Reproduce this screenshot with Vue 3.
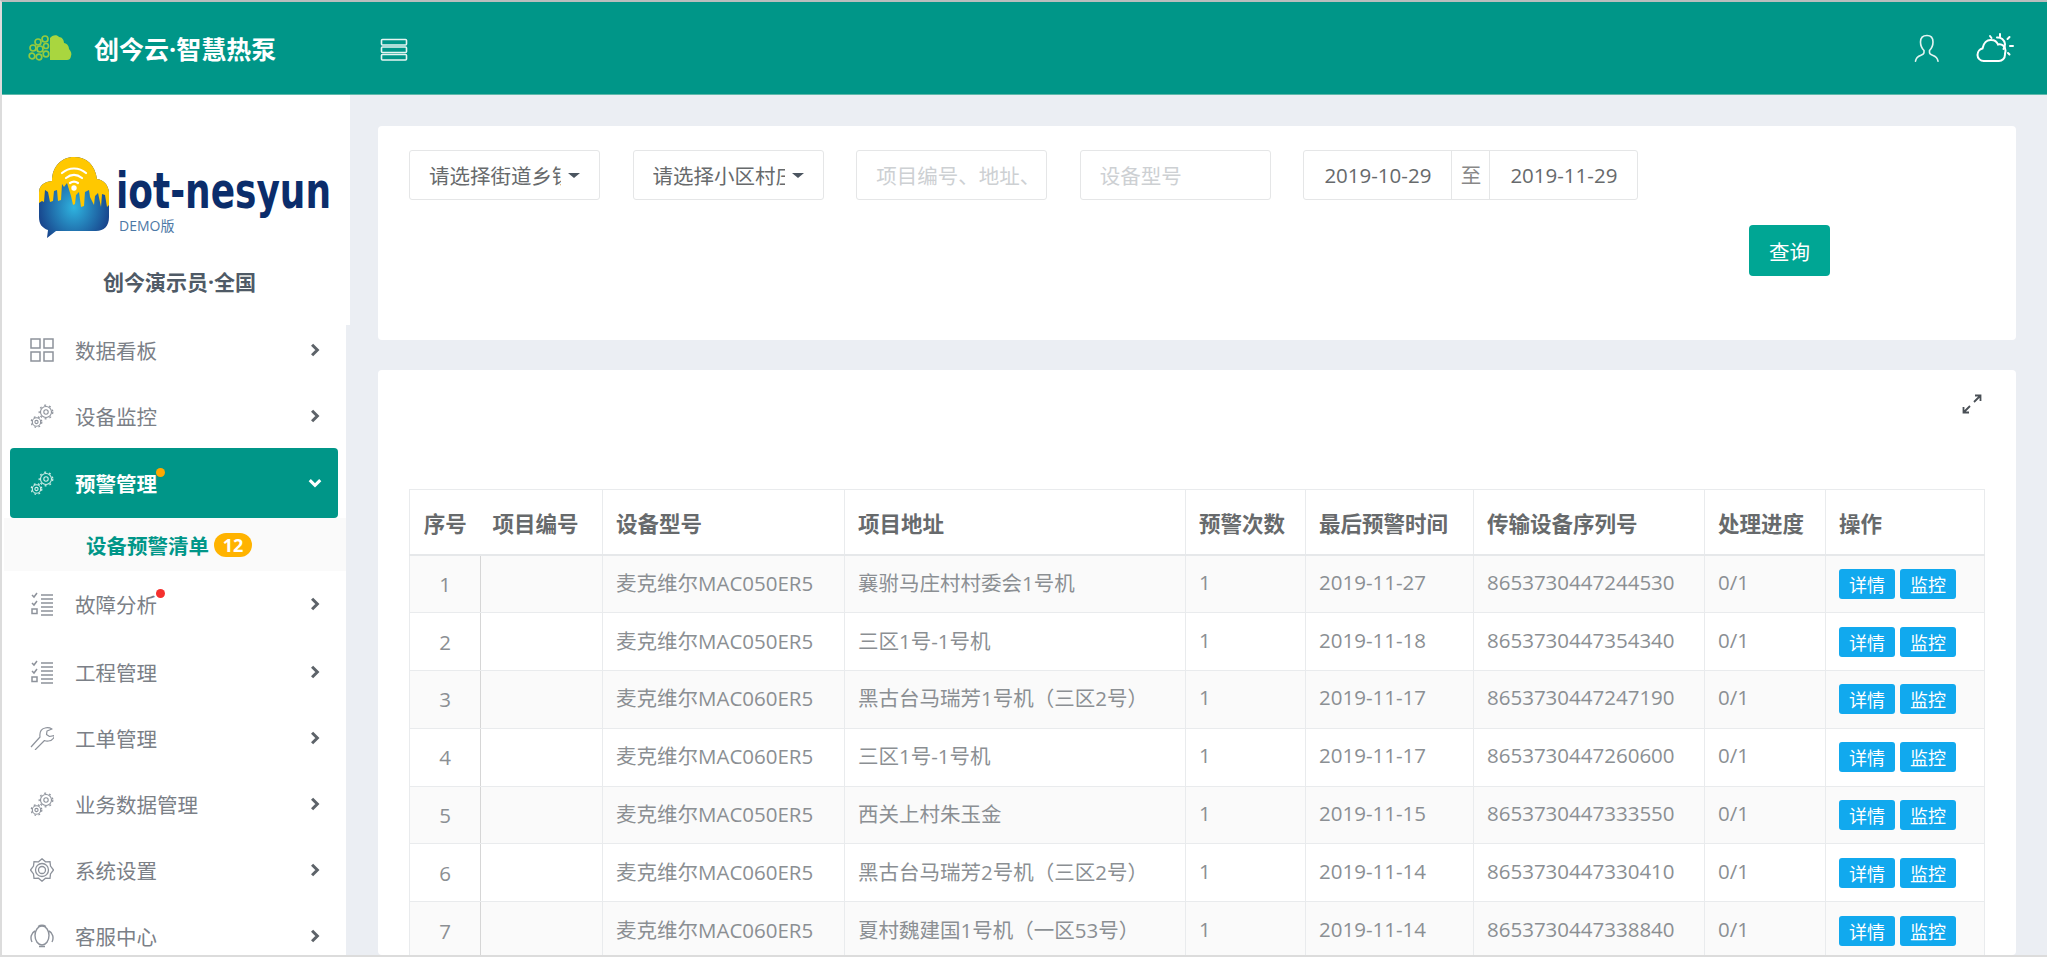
<template>
  <div class="frame">
    <header class="topbar">
      <div class="brand">
        <svg class="brand-logo" viewBox="0 0 44 28" width="44" height="28">
          <g fill="none" stroke="#95cb3f" stroke-width="1.700">
            <circle cx="17" cy="5" r="3" />
            <circle cx="10" cy="8" r="3" />
            <circle cx="5" cy="14" r="3" />
            <circle cx="12" cy="15" r="3" />
            <circle cx="18" cy="12" r="2.500" />
            <circle cx="4" cy="22" r="2.800" />
            <circle cx="11" cy="23" r="2.800" />
            <circle cx="18" cy="20" r="2.800" />
          </g>
          <path
            d="M22 26V4c2-3 7-4 9-1 3 0 5 3 5 6 3 .5 5 3 5 6 2 2 3 5 2 7-.5 3-2 4-4 4z"
            fill="#a9d63f"
          />
        </svg>
        <span class="brand-name">创今云·智慧热泵</span>
      </div>
      <svg class="menu-toggle" viewBox="0 0 28 24" width="28" height="24">
        <g fill="none" stroke="#e6f5f2" stroke-width="1.600">
          <rect x="1.500" y="1.500" width="25" height="5.500" rx="1" />
          <rect x="1.500" y="9" width="25" height="5.500" rx="1" />
          <rect x="1.500" y="16.500" width="25" height="5.500" rx="1" />
        </g>
      </svg>
      <div class="topbar-right">
        <svg viewBox="0 0 26 28" width="26" height="28">
          <path
            d="M13 1.500c-4 0-6.500 2.500-6.500 6.500 0 3.500 1.500 6.500 3.500 8.500v2c0 1-1 2-3 2.700-3 1-5 2.500-5.500 6M13 1.500c4 0 6 2.500 6 6.500 0 3.500-1.500 6.500-3.500 8.500v2c0 1 1 2 3 2.700 3 1 5 2.500 5.500 6"
            fill="none"
            stroke="#e3f4f1"
            stroke-width="1.600"
            stroke-linecap="round"
          />
        </svg>
        <svg viewBox="0 0 38 30" width="38" height="30">
          <g fill="none" stroke="#fff" stroke-width="2" stroke-linecap="round">
            <path d="M8 28c-4 0-6.500-3-6.500-6 0-3.500 2.500-6 5-6.500C7.500 10 11 6.500 15.500 7c3 0 5.500 2 6.500 4.500 4-1 7.500 2 7.500 6 0 1-.2 2-.5 3" />
            <path d="M8 28h15c3 0 6-2.500 6-6.500" />
            <path d="M21 4.500c4-.5 7.500 2.500 8 6.500 0 2-.5 3.500-1.500 5" />
            <path d="M24 1v2.500M33.500 4l-2 2M37 13h-3M33.500 21.500l-1.500-1.500M14 3l1.500 2" />
          </g>
        </svg>
      </div>
    </header>

    <div class="body">
      <aside class="sidebar">
        <div class="profile">
          <svg class="logo" viewBox="0 0 300 84" width="300" height="84">
            <defs>
              <radialGradient id="cityGrad" cx="50%" cy="62%" r="60%">
                <stop offset="0" stop-color="#2fb4e0" />
                <stop offset="1" stop-color="#14337f" />
              </radialGradient>
            </defs>
            <path
              d="M3 60V36c0-7 4-11 13-12 0-14 9-24 22-24s21 8 23 22c7 1 11 6 12 13v25c0 9-5 14-13 14H20l-9 7 1-8c-6-2-9-6-9-13z"
              fill="url(#cityGrad)"
            />
            <path
              d="M3 46V36c0-7 4-11 13-12 0-14 9-24 22-24s21 8 23 22c7 1 11 6 12 13v13l-2 2-2-12-3-1-1 13-3-14-3 3-1 9-4-8-1-7-4 2-1 14-3 1-2-15-3 3-1 9-2 1-2-9-4-13-3 4-2-3-1 16-3 1-1-11-3 1-1 10-3 1-2-10-3-2-1 12-2-1z"
              fill="#ffc800"
            />
            <g fill="none" stroke="#fff" stroke-width="2.200" stroke-linecap="round">
              <path d="M26 16c7-6 17-6 24 0" />
              <path d="M30 21c5-4 11-4 16 0" />
              <path d="M34 26c3-2 5-2 8 0" />
            </g>
            <circle cx="38" cy="31" r="2.700" fill="#fff" />
            <text class="wordmark" x="80" y="51" textLength="215" lengthAdjust="spacingAndGlyphs">iot-nesyun</text>
          </svg>
          <span class="demo">DEMO版</span>
          <p class="user-name">创今演示员·全国</p>
        </div>

        <nav class="menu">
          <template v-for="item in menu" :key="item.label">
            <div class="menu-item" :class="{ active: item.active, 'after-sub': item.gapAbove }">
              <svg class="menu-icon" viewBox="0 0 24 24" width="24" height="24">
                <template v-if="item.icon === 'grid'">
                  <g fill="none" stroke="currentColor" stroke-width="1.500">
                    <rect x="1" y="1" width="9" height="9" />
                    <rect x="14" y="1" width="9" height="9" />
                    <rect x="1" y="14" width="9" height="9" />
                    <rect x="14" y="14" width="9" height="9" />
                  </g>
                </template>
                <template v-else-if="item.icon === 'gears'">
                  <g fill="none" stroke="currentColor">
                    <circle cx="16" cy="8" r="5.500" stroke-width="1.100" />
                    <circle cx="16" cy="8" r="6.800" stroke-width="1.200" stroke-dasharray="2 3" />
                    <circle cx="16" cy="8" r="2.200" stroke-width="1.100" />
                    <circle cx="6.500" cy="18" r="4.200" stroke-width="1.100" />
                    <circle cx="6.500" cy="18" r="5.300" stroke-width="1.200" stroke-dasharray="1.800 2.500" />
                    <circle cx="6.500" cy="18" r="1.600" stroke-width="1.100" />
                  </g>
                </template>
                <template v-else-if="item.icon === 'list'">
                  <g fill="none" stroke="currentColor" stroke-width="1.500">
                    <path d="M2 3l2 2 3-4M2 11l2 2 3-4" />
                    <rect x="2" y="17" width="5" height="4.500" />
                    <path d="M11 3h12M11 7h12M11 11h12M11 15h12M11 19h12M11 23h12" />
                  </g>
                </template>
                <template v-else-if="item.icon === 'wrench'">
                  <path
                    d="M1 21l9-10c-.5-4 1-8 5-9 2.500-.7 5-.2 7 1l-5 2-.5 3.500 3 2 5-1c-.5 3-3 5-6 5.500-2 .3-3 0-4-.500L5 24"
                    fill="none"
                    stroke="currentColor"
                    stroke-width="1.200"
                    stroke-linejoin="round"
                  />
                </template>
                <template v-else-if="item.icon === 'cog'">
                  <g fill="none" stroke="currentColor" stroke-width="1.300">
                    <path d="M12 .8l3.500 3 4.500-.2.500 4.500 3 3.900-3 3.900-.5 4.500-4.500-.2-3.500 3-3.500-3-4.500.2-.5-4.500-3-3.900 3-3.900.5-4.500 4.500.2z" />
                    <circle cx="12" cy="12" r="6.500" />
                    <circle cx="12" cy="12" r="3.500" />
                  </g>
                </template>
                <template v-else>
                  <g fill="none" stroke="currentColor" stroke-width="1.400">
                    <ellipse cx="12" cy="11.500" rx="7" ry="9.500" />
                    <path d="M5 7C1 9 0 14 2 18M19 7c4 2 5 7 3 11M9 22.500h6" />
                    <path d="M8 2.500c2.500-1.500 5.500-1.500 8 0" />
                  </g>
                </template>
              </svg>
              <span class="menu-label">
                {{ item.label }}
                <i v-if="item.dot" class="dot" :class="item.dot"></i>
              </span>
              <svg class="chevron" viewBox="0 0 12 12" width="14" height="14">
                <path v-if="item.active" d="M1.500 3.500L6 8l4.500-4.500" />
                <path v-else d="M3.500 1.500L8 6l-4.500 4.500" />
              </svg>
            </div>
            <div v-if="item.active" class="sub-menu">
              <span class="sub-label">设备预警清单</span>
              <span class="count">12</span>
            </div>
          </template>
        </nav>
      </aside>

      <main class="main">
        <section class="card filters">
          <div class="filter-row">
            <div class="field select"><span class="select-text">请选择街道乡镇</span><i class="caret"></i></div>
            <div class="field select"><span class="select-text">请选择小区村庄</span><i class="caret"></i></div>
            <div class="field placeholder"><span class="select-text wide">项目编号、地址、</span></div>
            <div class="field placeholder">设备型号</div>
            <div class="date-range">
              <span class="date">2019-10-29</span>
              <span class="date-sep">至</span>
              <span class="date">2019-11-29</span>
            </div>
          </div>
          <button class="query-btn">查询</button>
        </section>

        <section class="card list">
          <div class="list-tools">
            <svg viewBox="0 0 20 20" width="20" height="20">
              <g fill="none" stroke="#4a5056" stroke-width="1.800">
                <path d="M12 8l6-6M13 1.500h5.500V7M8 12l-6 6M1.500 13v5.500H7" />
              </g>
            </svg>
          </div>
          <table class="alarm-table">
            <colgroup>
              <col v-for="w in colWidths" :key="w.key" :style="{ width: w.px + 'px' }" />
            </colgroup>
            <thead>
              <tr>
                <th class="first-head">序号</th>
                <th class="second-head">项目编号</th>
                <th>设备型号</th>
                <th>项目地址</th>
                <th>预警次数</th>
                <th>最后预警时间</th>
                <th>传输设备序列号</th>
                <th>处理进度</th>
                <th>操作</th>
              </tr>
            </thead>
            <tbody>
              <tr v-for="(row, i) in rows" :key="row.serial">
                <td class="index-cell">{{ i + 1 }}</td>
                <td></td>
                <td class="raised">{{ row.model }}</td>
                <td class="raised address" lang="zh-Hant">{{ row.address }}</td>
                <td class="raised">1</td>
                <td class="raised">{{ row.time }}</td>
                <td class="raised">{{ row.serial }}</td>
                <td class="raised">0/1</td>
                <td>
                  <div class="actions">
                    <button class="mini-btn">详情</button>
                    <button class="mini-btn">监控</button>
                  </div>
                </td>
              </tr>
            </tbody>
          </table>
        </section>
      </main>
    </div>
  </div>
</template>

<script setup>
const menu = [
  { label: '数据看板', icon: 'grid' },
  { label: '设备监控', icon: 'gears' },
  { label: '预警管理', icon: 'gears', active: true, dot: 'orange' },
  { label: '故障分析', icon: 'list', dot: 'red' },
  { label: '工程管理', icon: 'list', gapAbove: true },
  { label: '工单管理', icon: 'wrench' },
  { label: '业务数据管理', icon: 'gears' },
  { label: '系统设置', icon: 'cog' },
  { label: '客服中心', icon: 'headset' }
]

const colWidths = [
  { key: 'idx', px: 71 },
  { key: 'no', px: 122 },
  { key: 'model', px: 242 },
  { key: 'addr', px: 341 },
  { key: 'times', px: 120 },
  { key: 'time', px: 168 },
  { key: 'serial', px: 231 },
  { key: 'progress', px: 121 },
  { key: 'ops', px: 159 }
]

const rows = [
  { model: '麦克维尔MAC050ER5', address: '襄驸马庄村村委会1号机', time: '2019-11-27', serial: '8653730447244530' },
  { model: '麦克维尔MAC050ER5', address: '三区1号-1号机', time: '2019-11-18', serial: '8653730447354340' },
  { model: '麦克维尔MAC060ER5', address: '黑古台马瑞芳1号机（三区2号）', time: '2019-11-17', serial: '8653730447247190' },
  { model: '麦克维尔MAC060ER5', address: '三区1号-1号机', time: '2019-11-17', serial: '8653730447260600' },
  { model: '麦克维尔MAC050ER5', address: '西关上村朱玉金', time: '2019-11-15', serial: '8653730447333550' },
  { model: '麦克维尔MAC060ER5', address: '黑古台马瑞芳2号机（三区2号）', time: '2019-11-14', serial: '8653730447330410' },
  { model: '麦克维尔MAC060ER5', address: '夏村魏建国1号机（一区53号）', time: '2019-11-14', serial: '8653730447338840' }
]
</script>

<style>
html,
body {
  margin: 0;
  background: #fff;
}
</style>

<style scoped>
.frame {
  width: 2047px;
  height: 957px;
  box-sizing: border-box;
  border-top: 2px solid #b9bdbd;
  border-left: 2px solid #dcdcdc;
  border-bottom: 2px solid #dcdcdc;
  overflow: hidden;
  display: flex;
  flex-direction: column;
  background: #ebeef3;
  font-family: "Open Sans", "Noto Sans CJK SC", sans-serif;
  font-size: 20.5px;
  color: #676a6c;
}

.topbar {
  height: 93px;
  flex: none;
  box-sizing: border-box;
  border-bottom: 1px solid #5fb9ab;
  background: #009688;
  display: flex;
  align-items: center;
  color: #fff;
}
.brand {
  width: 378px;
  display: flex;
  align-items: center;
  padding-left: 26px;
  box-sizing: border-box;
}
.brand-name {
  margin-left: 22px;
  font-size: 25px;
  font-weight: 700;
}
.menu-toggle {
  margin-top: 4px;
}
.topbar-right {
  margin-left: auto;
  display: flex;
  align-items: center;
  gap: 36px;
  padding-right: 33px;
}

.body {
  flex: 1;
  display: flex;
  min-height: 0;
}

.sidebar {
  width: 348px;
  flex: none;
}
.profile {
  height: 230px;
  background: #fff;
  position: relative;
  box-sizing: border-box;
  padding-top: 62px;
  padding-left: 34px;
}
.logo {
  display: block;
  overflow: visible;
}
.wordmark {
  font-family: "DejaVu Sans", sans-serif;
  font-weight: 700;
  font-size: 50px;
  fill: #0b2d6b;
}
.demo {
  position: absolute;
  left: 117px;
  top: 120px;
  font-size: 14px;
  color: #4d79a6;
}
.user-name {
  margin: 25px 0 0 67px;
  font-size: 21px;
  font-weight: 700;
  color: #4f5a66;
}

.menu {
  width: 344px;
  height: 700px;
  background: #fff;
}
.menu-item {
  height: 66px;
  display: flex;
  align-items: center;
  padding: 0 24px 0 28px;
  color: #7b8087;
  position: relative;
}
.menu-item:first-child {
  margin-top: -8px;
}
.menu-item.after-sub {
  margin-top: 2px;
}
.menu-icon {
  flex: none;
  color: #8d929b;
}
.menu-label {
  margin-left: 21px;
  position: relative;
}
.chevron {
  margin-left: auto;
  fill: none;
  stroke: #5d6369;
  stroke-width: 2.600;
}
.menu-item.active {
  height: 70px;
  margin: -1px 8px 0;
  padding: 0 16px 0 20px;
  box-sizing: border-box;
  border-radius: 4px;
  background: #009688;
  color: #fff;
  font-weight: 700;
}
.menu-item.active .menu-icon {
  color: #d4efe9;
}
.menu-item.active .chevron {
  stroke: #fff;
}
.dot {
  position: absolute;
  top: 0;
  right: -8px;
  width: 9px;
  height: 9px;
  border-radius: 50%;
}
.dot.orange {
  background: #ffa800;
}
.dot.red {
  background: #f5302e;
}
.sub-menu {
  height: 53px;
  margin-left: 2px;
  background: #fafafa;
  display: flex;
  align-items: center;
  padding-left: 82px;
  font-weight: 700;
  color: #009688;
}
.count {
  margin-left: 5px;
  width: 38px;
  height: 24px;
  border-radius: 12px;
  background: #ffb300;
  color: #fff;
  font-size: 18px;
  line-height: 24px;
  text-align: center;
}

.main {
  flex: 1;
  min-width: 0;
  padding: 31px 31px 0 28px;
  display: flex;
  flex-direction: column;
  gap: 30px;
}
.card {
  background: #fff;
  border-radius: 4px;
}
.filters {
  height: 214px;
  flex: none;
  box-sizing: border-box;
  padding: 24px 0 0 31px;
}
.filter-row {
  display: flex;
  gap: 32.600px;
}
.field {
  width: 191px;
  height: 50px;
  box-sizing: border-box;
  border: 1px solid #e5e6e7;
  border-radius: 3px;
  display: flex;
  align-items: center;
  padding-left: 19px;
}
.select-text {
  display: block;
  width: 132px;
  overflow: hidden;
  white-space: nowrap;
}
.select-text.wide {
  width: 166px;
}
.caret {
  width: 0;
  height: 0;
  margin-left: 7px;
  border-top: 5px solid #4b5560;
  border-left: 6px solid transparent;
  border-right: 6px solid transparent;
}
.placeholder {
  color: #cdd0d3;
}
.date-range {
  width: 335px;
  height: 50px;
  box-sizing: border-box;
  border: 1px solid #e5e6e7;
  border-radius: 3px;
  display: flex;
  align-items: center;
}
.date {
  flex: 1;
  text-align: center;
}
.date-sep {
  width: 37px;
  flex: none;
  height: 100%;
  line-height: 48px;
  text-align: center;
  border-left: 1px solid #e5e6e7;
  border-right: 1px solid #e5e6e7;
  color: #888;
}
.query-btn {
  display: block;
  margin: 25px 0 0 1340px;
  width: 81px;
  height: 51px;
  border: none;
  border-radius: 4px;
  background: #00a694;
  color: #fff;
  font: inherit;
}

.list {
  flex: 1;
  min-height: 0;
  overflow: hidden;
  padding: 0 31px 0 31px;
}
.list-tools {
  height: 119px;
  display: flex;
  justify-content: flex-end;
  align-items: flex-start;
  padding: 24px 3px 0 0;
  box-sizing: border-box;
}
.alarm-table {
  table-layout: fixed;
  width: 1575px;
  border-collapse: collapse;
}
.alarm-table th,
.alarm-table td {
  border: 1px solid #e9ebed;
  padding: 0 13px;
  text-align: left;
  white-space: nowrap;
  overflow: hidden;
}
.alarm-table th {
  height: 64px;
  font-size: 21.5px;
  font-weight: 700;
  color: #676a6c;
  border-bottom: 2px solid #e6e8ea;
}
.alarm-table td {
  box-sizing: border-box;
  height: 57.800px;
  color: #8b8f93;
}
.alarm-table td.raised {
  padding-bottom: 4px;
}
.alarm-table td.address {
  font-family: "Open Sans", "Noto Sans CJK TC", sans-serif;
}
.alarm-table tbody tr:nth-child(odd) {
  background: #fafafa;
}
.alarm-table .first-head {
  text-align: center;
  padding: 0;
  border-right: none;
}
.alarm-table .second-head {
  border-left: none;
  padding-left: 12px;
}
.alarm-table .index-cell {
  text-align: center;
  border-right: 1px solid #d6d6d6;
}
.actions {
  display: flex;
  gap: 5px;
}
.mini-btn {
  width: 56px;
  height: 30px;
  padding: 0;
  border: none;
  border-radius: 3px;
  background: #11a9ee;
  color: #fff;
  font: inherit;
  font-size: 18px;
}
</style>
